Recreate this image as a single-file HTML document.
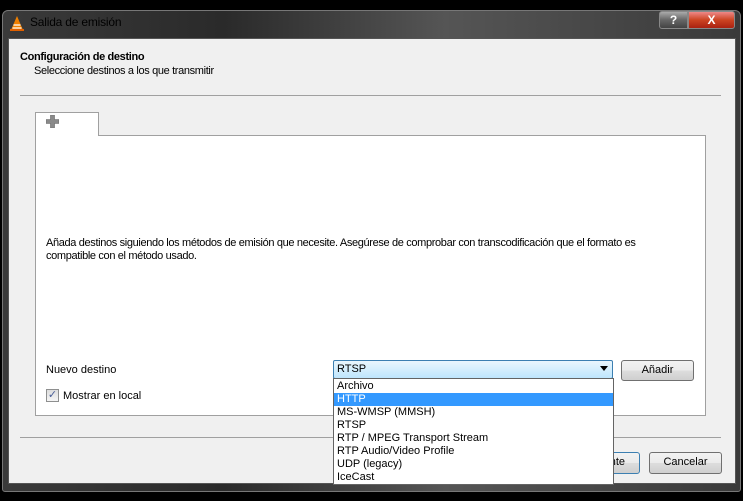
<!DOCTYPE html>
<html><head><meta charset="utf-8"><style>
*{margin:0;padding:0;box-sizing:border-box}
body{width:743px;height:501px;background:#000;position:relative;overflow:hidden;font-family:"Liberation Sans",sans-serif;font-size:11px;color:#000}
.a{position:absolute}
.frame{left:2px;top:10px;width:739px;height:482px;background:linear-gradient(90deg,#3a3a3a,#2a2a2a 30%,#555 60%,#3a3a3a);border:1px solid #777;border-radius:6px 6px 3px 3px}
.client{left:8px;top:38px;width:728px;height:446px;background:#f0f0f0;border:1px solid #555}
.n{letter-spacing:-0.35px}
.btn{border:1px solid #707070;border-radius:3px;background:linear-gradient(#f2f2f2,#ebebeb 50%,#dddddd 51%,#cfcfcf);text-align:center;line-height:19px;font-size:11px}
.li{position:absolute;left:3px;font-size:11px;height:13px;line-height:13px}
</style></head><body>
<div class="a frame"></div>
<svg class="a" style="left:9px;top:15px" width="16" height="17" viewBox="0 0 16 17"><path d="M8 1 L14 15 H2 Z" fill="#f08000"/><path d="M4.5 10h7M3.5 13h9" stroke="#fff" stroke-width="1.3"/><rect x="1" y="14" width="14" height="2" fill="#e06000"/></svg>
<div class="a" style="left:30px;top:15px;font-size:12px;color:#000;letter-spacing:-0.2px">Salida de emisión</div>
<div class="a" style="left:659px;top:11px;width:29px;height:18px;border:1px solid #888;border-radius:3px 0 0 3px;background:linear-gradient(#aaa,#666 50%,#444);color:#fff;font-weight:bold;text-align:center;line-height:16px;font-size:12px">?</div>
<div class="a" style="left:688px;top:11px;width:47px;height:18px;border:1px solid #888;border-radius:0 3px 3px 0;background:linear-gradient(#e88,#c42 50%,#a21);color:#fff;font-weight:bold;text-align:center;line-height:16px;font-size:12px">X</div>
<div class="a client"></div>
<div class="a n" style="left:20px;top:51px;font-weight:bold">Configuración de destino</div>
<div class="a n" style="left:34px;top:65px">Seleccione destinos a los que transmitir</div>
<div class="a" style="left:20px;top:95px;width:701px;height:1px;background:#a0a0a0"></div>
<div class="a" style="left:35px;top:135px;width:671px;height:281px;background:#fff;border:1px solid #a0a0a0"></div>
<div class="a" style="left:35px;top:112px;width:64px;height:24px;background:#fff;border:1px solid #a0a0a0;border-bottom:none"></div>
<svg class="a" style="left:46px;top:115px" width="13" height="13" viewBox="0 0 13 13"><path d="M4.5 0h4v4.5h4.5v4h-4.5v4.5h-4v-4.5h-4.5v-4h4.5z" fill="#8a8a8a" stroke="#666" stroke-width=".6"/></svg>
<div class="a n" style="left:46px;top:237px;line-height:13px">Añada destinos siguiendo los métodos de emisión que necesite. Asegúrese de comprobar con transcodificación que el formato es<br>compatible con el método usado.</div>
<div class="a" style="left:46px;top:364px">Nuevo destino</div>
<div class="a" style="left:46px;top:389px;width:13px;height:13px;border:1px solid #8e8f8f;background:linear-gradient(#ddd,#f5f5f5);color:#4a5f97;font-size:11px;line-height:11px;text-align:center">✓</div>
<div class="a" style="left:63px;top:390px">Mostrar en local</div>
<div class="a" style="left:333px;top:360px;width:280px;height:19px;border:1px solid #3c7fb1;border-radius:2px;background:linear-gradient(#eaf6fd,#bee6fd)"></div>
<div class="a" style="left:337px;top:363px">RTSP</div>
<div class="a" style="left:600px;top:366px;width:0;height:0;border-left:4px solid transparent;border-right:4px solid transparent;border-top:5px solid #000"></div>
<div class="a btn" style="left:621px;top:360px;width:73px;height:21px">Añadir</div>
<div class="a" style="left:20px;top:437px;width:701px;height:1px;background:#a0a0a0"></div>
<div class="a btn" style="left:570px;top:452px;width:70px;height:22px;border-color:#3c7fb1;text-align:right;padding-right:14px">Siguiente</div>
<div class="a btn" style="left:649px;top:452px;width:73px;height:22px">Cancelar</div>
<div class="a" style="left:333px;top:378px;width:281px;height:107px;background:#fff;border:1px solid #646464">
<div class="li" style="top:1px">Archivo</div>
<div class="a" style="left:0;top:14px;width:279px;height:13px;background:#3399ff"></div>
<div class="li" style="top:14px;color:#fff">HTTP</div>
<div class="li" style="top:27px">MS-WMSP (MMSH)</div>
<div class="li" style="top:40px">RTSP</div>
<div class="li" style="top:53px">RTP / MPEG Transport Stream</div>
<div class="li" style="top:66px">RTP Audio/Video Profile</div>
<div class="li" style="top:79px">UDP (legacy)</div>
<div class="li" style="top:92px">IceCast</div>
</div>
</body></html>
